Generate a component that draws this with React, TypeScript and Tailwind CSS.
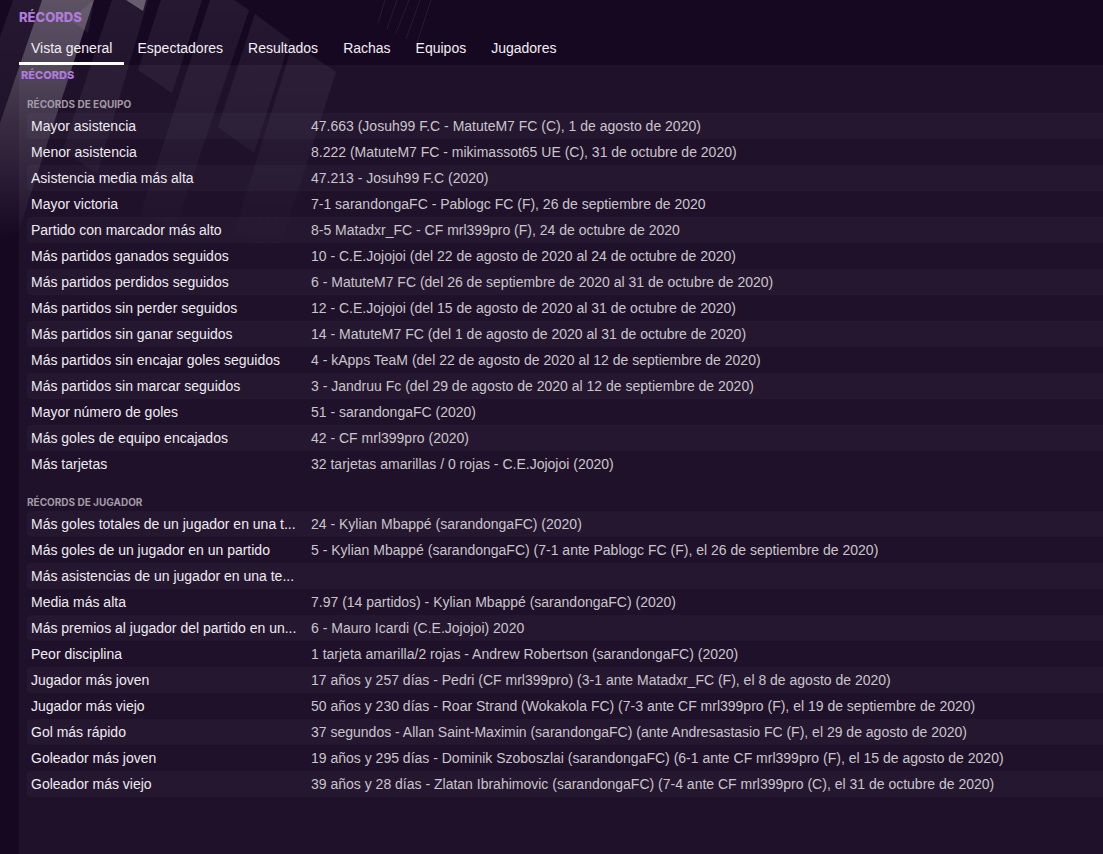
const tabs = ['Vista general', 'Espectadores', 'Resultados', 'Rachas', 'Equipos', 'Jugadores'];

type RecordRow = [label: string, value: string];

const teamRecords: RecordRow[] = [
  ['Mayor asistencia', '47.663 (Josuh99 F.C - MatuteM7 FC (C), 1 de agosto de 2020)'],
  ['Menor asistencia', '8.222 (MatuteM7 FC - mikimassot65 UE (C), 31 de octubre de 2020)'],
  ['Asistencia media más alta', '47.213 - Josuh99 F.C (2020)'],
  ['Mayor victoria', '7-1 sarandongaFC - Pablogc FC (F), 26 de septiembre de 2020'],
  ['Partido con marcador más alto', '8-5 Matadxr_FC - CF mrl399pro (F), 24 de octubre de 2020'],
  ['Más partidos ganados seguidos', '10 - C.E.Jojojoi (del 22 de agosto de 2020 al 24 de octubre de 2020)'],
  ['Más partidos perdidos seguidos', '6 - MatuteM7 FC (del 26 de septiembre de 2020 al 31 de octubre de 2020)'],
  ['Más partidos sin perder seguidos', '12 - C.E.Jojojoi (del 15 de agosto de 2020 al 31 de octubre de 2020)'],
  ['Más partidos sin ganar seguidos', '14 - MatuteM7 FC (del 1 de agosto de 2020 al 31 de octubre de 2020)'],
  ['Más partidos sin encajar goles seguidos', '4 - kApps TeaM (del 22 de agosto de 2020 al 12 de septiembre de 2020)'],
  ['Más partidos sin marcar seguidos', '3 - Jandruu Fc (del 29 de agosto de 2020 al 12 de septiembre de 2020)'],
  ['Mayor número de goles', '51 - sarandongaFC (2020)'],
  ['Más goles de equipo encajados', '42 - CF mrl399pro (2020)'],
  ['Más tarjetas', '32 tarjetas amarillas / 0 rojas - C.E.Jojojoi (2020)'],
];

const playerRecords: RecordRow[] = [
  ['Más goles totales de un jugador en una t...', '24 - Kylian Mbappé (sarandongaFC) (2020)'],
  ['Más goles de un jugador en un partido', '5 - Kylian Mbappé (sarandongaFC) (7-1 ante Pablogc FC (F), el 26 de septiembre de 2020)'],
  ['Más asistencias de un jugador en una te...', ''],
  ['Media más alta', '7.97 (14 partidos) - Kylian Mbappé (sarandongaFC) (2020)'],
  ['Más premios al jugador del partido en un...', '6 - Mauro Icardi (C.E.Jojojoi) 2020'],
  ['Peor disciplina', '1 tarjeta amarilla/2 rojas - Andrew Robertson (sarandongaFC) (2020)'],
  ['Jugador más joven', '17 años y 257 días - Pedri (CF mrl399pro) (3-1 ante Matadxr_FC (F), el 8 de agosto de 2020)'],
  ['Jugador más viejo', '50 años y 230 días - Roar Strand (Wokakola FC) (7-3 ante CF mrl399pro (F), el 19 de septiembre de 2020)'],
  ['Gol más rápido', '37 segundos - Allan Saint-Maximin (sarandongaFC) (ante Andresastasio FC (F), el 29 de agosto de 2020)'],
  ['Goleador más joven', '19 años y 295 días - Dominik Szoboszlai (sarandongaFC) (6-1 ante CF mrl399pro (F), el 15 de agosto de 2020)'],
  ['Goleador más viejo', '39 años y 28 días - Zlatan Ibrahimovic (sarandongaFC) (7-4 ante CF mrl399pro (C), el 31 de octubre de 2020)'],
];

function Backdrop() {
  return (
    <svg aria-hidden="true" className="pointer-events-none absolute top-0 left-0" width="460" height="270" viewBox="0 0 460 270">
      <defs>
        <linearGradient id="beam" x1="0" y1="0" x2="0" y2="240" gradientUnits="userSpaceOnUse">
          <stop offset="0" stopColor="#fff" stopOpacity="0.3" />
          <stop offset="0.2" stopColor="#fff" stopOpacity="0.26" />
          <stop offset="0.5" stopColor="#fff" stopOpacity="0.15" />
          <stop offset="1" stopColor="#fff" stopOpacity="0" />
        </linearGradient>
        <linearGradient id="band" x1="0" y1="0" x2="0" y2="255" gradientUnits="userSpaceOnUse">
          <stop offset="0" stopColor="#fff" stopOpacity="0.065" />
          <stop offset="0.4" stopColor="#fff" stopOpacity="0.045" />
          <stop offset="1" stopColor="#fff" stopOpacity="0" />
        </linearGradient>
      </defs>
      <path d="M42 0H94L18 233L0 240V123Z" fill="url(#beam)" />
      <path d="M126 0H146L143 11Z" fill="#fff" opacity=".3" />
      <g fill="url(#band)">
        <path d="M13 0H42L0 123V37Z" />
        <path d="M112 0H148L97 174L63 150Z" />
        <path d="M70 20L94 0L88 33Z" />
        <path d="M161 0H202L172 93L138 70Z" />
        <path d="M210 0H234L249 10L175 229L141 213Z" />
        <path d="M255 14L290 40L254 153L218 127Z" />
        <path d="M293 43L336 72L278 253L234 233Z" />
      </g>
      <g stroke="#fff" strokeOpacity=".08">
        <path d="M431 0L417 43M420 0L406 39M409 0L396 33M397 0L387 29M385 0L378 23" />
      </g>
    </svg>
  );
}

function RecordSection({ title, rows }: { title: string; rows: RecordRow[] }) {
  return (
    <section className="pl-2">
      <h3 className="h-5 pt-0.5 font-[Inter,sans-serif] text-[10px] leading-[18px] font-bold text-[#a29aa6]">{title}</h3>
      <table className="w-full table-fixed border-collapse text-left text-sm">
        <colgroup>
          <col className="w-[280px]" />
          <col />
        </colgroup>
        <tbody>
          {rows.map(([label, value]) => (
            <tr key={label} className="group h-[26px]">
              <th scope="row" className="rounded-l-sm p-0 pl-1 font-normal whitespace-nowrap text-[#eeebf0] group-odd:bg-[#d8d4ff]/3">{label}</th>
              <td className="p-0 pl-1 whitespace-nowrap text-[#c9c5cb] group-odd:bg-[#d8d4ff]/3">{value}</td>
            </tr>
          ))}
        </tbody>
      </table>
    </section>
  );
}

export default function App() {
  return (
    <div className="relative isolate flex min-h-screen flex-col overflow-x-hidden bg-[#170822] pl-[19px] font-['Liberation_Sans',sans-serif]">
      <Backdrop />
      <header className="relative">
        <h1 className="h-8 pt-2 font-[Inter,sans-serif] text-[13px] leading-[18px] font-extrabold text-[#b07bdc]">RÉCORDS</h1>
        <nav className="flex h-[33px] gap-px text-sm text-[#f1eef3]">
          {tabs.map((tab, i) => (
            <a
              key={tab}
              href="#"
              aria-current={i === 0 ? 'page' : undefined}
              className="flex items-center border-b-3 border-transparent px-3 pt-0.5 whitespace-nowrap aria-[current=page]:border-white"
            >
              {tab}
            </a>
          ))}
        </nav>
      </header>
      <main className="relative grow bg-white/4">
        <h2 className="h-7 pl-0.5 font-[Inter,sans-serif] text-[11px] leading-5 font-extrabold text-[#b07bdc]">RÉCORDS</h2>
        <div className="flex flex-col gap-[14px]">
          <RecordSection title="RÉCORDS DE EQUIPO" rows={teamRecords} />
          <RecordSection title="RÉCORDS DE JUGADOR" rows={playerRecords} />
        </div>
      </main>
    </div>
  );
}
